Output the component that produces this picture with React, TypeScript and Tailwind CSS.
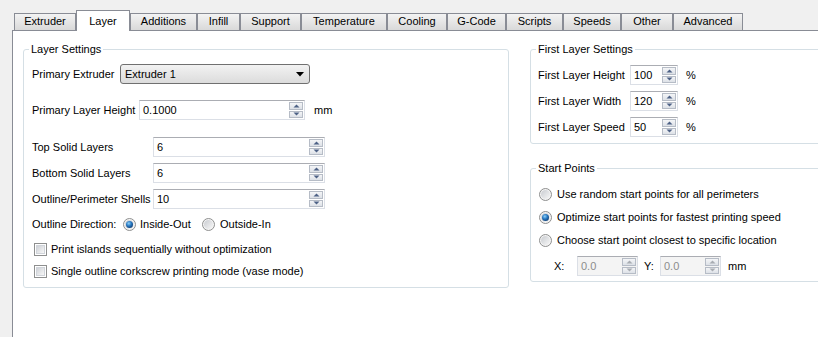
import type { ReactNode } from "react"

const tabs = [
  { name: "Extruder", w: 62 },
  { name: "Layer", w: 54, active: true },
  { name: "Additions", w: 67 },
  { name: "Infill", w: 43 },
  { name: "Support", w: 61 },
  { name: "Temperature", w: 86 },
  { name: "Cooling", w: 60 },
  { name: "G-Code", w: 59 },
  { name: "Scripts", w: 57 },
  { name: "Speeds", w: 58 },
  { name: "Other", w: 52 },
  { name: "Advanced", w: 70 },
]

function Arrow({ up, color }: { up?: boolean; color: string }) {
  return (
    <svg width="7" height="4" viewBox="0 0 7 4">
      <polygon points={up ? "0.5,3.5 3.5,0.5 6.5,3.5" : "0.5,0.5 3.5,3.5 6.5,0.5"} fill={color} />
    </svg>
  )
}

function Spin({ value, w, disabled }: { value: string; w: number; disabled?: boolean }) {
  const arrow = disabled ? "#a8acb2" : "#4d6185"
  return (
    <div
      className={`flex h-[20px] border border-[#dbdfe6] border-t-[#abadb3] ${disabled ? "bg-[#f4f4f4] text-[#8c8c8c]" : "bg-white text-black"}`}
      style={{ width: w }}
    >
      <div className="flex-1 pl-[3px] leading-[18px]">{value}</div>
      <div className="flex flex-col w-[15px] py-[1px] pr-[1px] gap-[1px]">
        <div className="flex-1 flex items-center justify-center border border-[#b6bcc6] bg-linear-to-b from-[#f4f5f7] to-[#dde1e7]">
          <Arrow up color={arrow} />
        </div>
        <div className="flex-1 flex items-center justify-center border border-[#b6bcc6] bg-linear-to-b from-[#f4f5f7] to-[#dde1e7]">
          <Arrow color={arrow} />
        </div>
      </div>
    </div>
  )
}

function Radio({ checked }: { checked?: boolean }) {
  return (
    <svg width="13" height="13" viewBox="0 0 13 13" className="shrink-0">
      <defs>
        <linearGradient id="rbg" x1="0" y1="0" x2="1" y2="1">
          <stop offset="0" stopColor="#c9ccd1" />
          <stop offset="1" stopColor="#f7f7f7" />
        </linearGradient>
        <radialGradient id="rdot" cx="0.4" cy="0.35" r="0.7">
          <stop offset="0" stopColor="#8fd0f7" />
          <stop offset="0.5" stopColor="#2a7bc4" />
          <stop offset="1" stopColor="#0f3d73" />
        </radialGradient>
      </defs>
      <circle cx="6.5" cy="6.5" r="6" fill="#f4f4f4" stroke="#8e8f8f" />
      <circle cx="6.5" cy="6.5" r="4.5" fill="url(#rbg)" />
      {checked && <circle cx="6.5" cy="6.5" r="3.5" fill="url(#rdot)" />}
    </svg>
  )
}

function Check() {
  return (
    <div className="w-[13px] h-[13px] shrink-0 border border-[#8e8f8f] bg-white p-[1px]">
      <div className="w-full h-full border border-[#d0d4da] bg-linear-to-br from-[#cfd2d7] to-[#f7f7f7]" />
    </div>
  )
}

function Group({ title, className, children }: { title: string; className: string; children: ReactNode }) {
  return (
    <fieldset className={`border border-[#d5dfe5] rounded-[3px] ${className}`}>
      <legend className="ml-[5px] px-[2px] leading-[14px]">{title}</legend>
      {children}
    </fieldset>
  )
}

export default function App() {
  return (
    <div className="w-[818px] h-[337px] overflow-hidden bg-[#f0f0f0] font-['Liberation_Sans',Arial,sans-serif] text-[11px] text-black">
      {/* tab strip */}
      <div className="h-[30px] pl-[14px] flex items-end">
        {tabs.map((t) =>
          t.active ? (
            <div
              key={t.name}
              className="relative z-10 -mb-px h-[21px] pt-[3px] border border-b-0 border-[#898c95] bg-white text-center leading-[15px]"
              style={{ width: t.w }}
            >
              {t.name}
            </div>
          ) : (
            <div
              key={t.name}
              className="h-[17px] border border-b-0 border-[#898c95] bg-linear-to-b from-[#f3f3f3] to-[#d9d9d9] text-center leading-[15px]"
              style={{ width: t.w }}
            >
              {t.name}
            </div>
          )
        )}
      </div>

      {/* tab page */}
      <div className="ml-[12px] h-[307px] border-l border-t border-[#898c95] bg-white flex gap-[21px] pl-[10px] pt-[11px]">
        <Group title="Layer Settings" className="w-[486px] h-[246px] shrink-0">
          <div className="flex flex-col pl-[8px]">
            <div className="mt-[8px] flex items-center h-[20px]">
              <div className="w-[88px]">Primary Extruder</div>
              <div className="w-[190px] h-[20px] flex items-center justify-between px-[4px] rounded-[3px] border border-[#707070] bg-linear-to-b from-[#f2f2f2] to-[#dcdcdc]">
                <span>Extruder 1</span>
                <svg width="8" height="5" viewBox="0 0 8 5" className="mr-[1px]">
                  <polygon points="0,0 8,0 4,4.5" fill="#000" />
                </svg>
              </div>
            </div>
            <div className="mt-[16px] flex items-center h-[20px]">
              <div className="w-[107px]">Primary Layer Height</div>
              <Spin value="0.1000" w={166} />
              <div className="ml-[9px]">mm</div>
            </div>
            <div className="mt-[17px] flex items-center h-[20px]">
              <div className="w-[121px]">Top Solid Layers</div>
              <Spin value="6" w={172} />
            </div>
            <div className="mt-[6px] flex items-center h-[20px]">
              <div className="w-[121px]">Bottom Solid Layers</div>
              <Spin value="6" w={172} />
            </div>
            <div className="mt-[6px] flex items-center h-[20px]">
              <div className="w-[121px]">Outline/Perimeter Shells</div>
              <Spin value="10" w={172} />
            </div>
            <div className="mt-[5px] flex items-center h-[20px]">
              <div className="w-[91px]">Outline Direction:</div>
              <Radio checked />
              <div className="ml-[4px] w-[62px]">Inside-Out</div>
              <Radio />
              <div className="ml-[5px]">Outside-In</div>
            </div>
            <div className="mt-[5px] flex items-center h-[20px] pl-[2px] gap-[4px]">
              <Check />
              <span>Print islands sequentially without optimization</span>
            </div>
            <div className="mt-[2px] flex items-center h-[20px] pl-[2px] gap-[4px]">
              <Check />
              <span>Single outline corkscrew printing mode (vase mode)</span>
            </div>
          </div>
        </Group>

        <div className="flex flex-col shrink-0">
          <Group title="First Layer Settings" className="w-[300px] h-[102px]">
            <div className="flex flex-col pl-[7px]">
              {[
                ["First Layer Height", "100"],
                ["First Layer Width", "120"],
                ["First Layer Speed", "50"],
              ].map(([label, v], i) => (
                <div key={label} className={`flex items-center h-[20px] ${i === 0 ? "mt-[9px]" : "mt-[6px]"}`}>
                  <div className="w-[92px]">{label}</div>
                  <Spin value={v} w={48} />
                  <div className="ml-[8px]">%</div>
                </div>
              ))}
            </div>
          </Group>

          <Group title="Start Points" className="mt-[17px] w-[300px] h-[121px]">
            <div className="flex flex-col pl-[8px]">
              {[
                ["Use random start points for all perimeters", false],
                ["Optimize start points for fastest printing speed", true],
                ["Choose start point closest to specific location", false],
              ].map(([label, on], i) => (
                <div key={String(label)} className={`flex items-center h-[16px] gap-[5px] ${i === 0 ? "mt-[11px]" : "mt-[7px]"}`}>
                  <Radio checked={Boolean(on)} />
                  <span>{label}</span>
                </div>
              ))}
              <div className="mt-[8px] flex items-center h-[20px] pl-[15px]">
                <div className="w-[23px]">X:</div>
                <Spin value="0.0" w={61} disabled />
                <div className="ml-[6px] w-[16px]">Y:</div>
                <Spin value="0.0" w={61} disabled />
                <div className="ml-[7px]">mm</div>
              </div>
            </div>
          </Group>
        </div>
      </div>
    </div>
  )
}
